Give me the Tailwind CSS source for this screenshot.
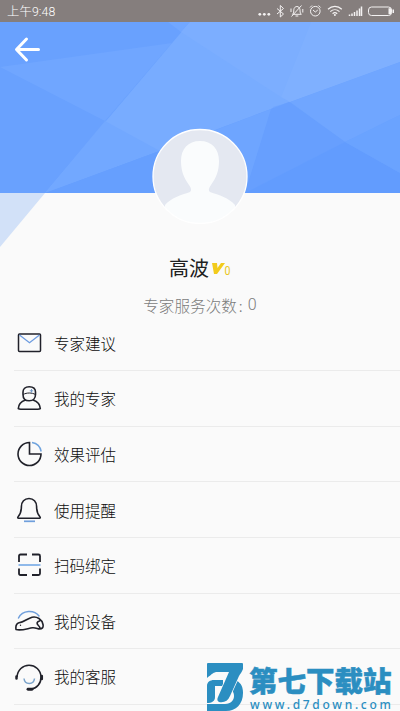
<!DOCTYPE html>
<html lang="zh-CN">
<head>
<meta charset="utf-8">
<meta name="viewport" content="width=device-width, initial-scale=1">
<title>高波</title>
<script src="https://cdn.jsdelivr.net/npm/@tailwindcss/browser@4"></script>
</head>
<body class="bg-[#fafafa] overflow-hidden font-['Noto_Sans_CJK_SC',sans-serif]">
<div class="relative w-[400px] h-[711px] overflow-hidden flex flex-col">
  <div class="h-[22px] shrink-0 bg-[#857e7d] flex items-center justify-between pl-[7px] text-white">
    <span class="pt-[1px] text-[12.300px] leading-[22px] font-light tracking-[0.150px] font-[Roboto,'Noto_Sans_CJK_SC',sans-serif]">上午9:48</span>
    <svg class="w-[150px] h-[22px]" viewBox="250 0 150 22" fill="none" stroke="#f4f2f2" stroke-width="1">
      <g fill="#f4f2f2" stroke="none"><circle cx="259.800" cy="14.300" r="1.400"/><circle cx="264.300" cy="14.300" r="1.400"/><circle cx="268.800" cy="14.300" r="1.400"/></g>
      <path d="M277 8.500l6.500 5.500-3.200 3V5.500l3.200 3-6.500 5.500"/>
      <path d="M292.500 14.300c1.500-1.400 1.200-3 1.300-4.500.2-2 1.500-3.300 3.100-3.300s2.900 1.300 3.100 3.300c.1 1.500-.2 3.100 1.300 4.500zM295.500 16h2.800M301.500 5.500l-10 11M291 8.500v3.500M302.800 9v3.500"/>
      <circle cx="315.300" cy="11.200" r="4.800"/><path d="M313 10l2.300 2 2.500-2M310 7.500l2-2M318.600 5.500l2 2"/>
      <path d="M328 9.300c4-3.800 9.800-3.800 13.800 0M330.300 11.600c2.700-2.500 6.500-2.500 9.200 0M332.600 13.700c1.400-1.200 3.200-1.200 4.600 0" stroke-width="1.200"/><circle cx="334.900" cy="15" r="1" fill="#f4f2f2" stroke="none"/>
      <path d="M349.500 16v-1.500M352 16v-2.500M354.500 16v-4M357 16v-5.500M359.500 16V8.500M361.500 16V6.500" stroke-width="1.500"/>
      <rect x="368.500" y="7" width="23" height="8.500" rx="3"/><path d="M388.500 8.300h1.500c1 0 1.500.5 1.500 1.500v3c0 1-.5 1.500-1.500 1.500h-1.500zM392.500 9.500h1.500v3.500h-1.500z" fill="#f4f2f2" stroke="none"/>
    </svg>
  </div>

  <header class="relative h-[171px] shrink-0">
    <svg class="block w-[400px] h-[226px]" viewBox="0 22 400 226">
      <path d="M0 22h400v171H0z" fill="#69a1fe"/>
      <path d="M0 67L172 43 105 121z" fill="#70a6ff"/>
      <path d="M190 22h210v40L290 102 45 193z" fill="#78acff"/>
      <path d="M45 193L105 121 160 151 155 152z" fill="#72a8ff"/>
      <path d="M168 22h22l-9 10z" fill="#71a7ff"/>
      <path d="M190 22h121L281 97 181 32z" fill="#7caeff"/>
      <path d="M311 22h89v40L290 102l-9-5z" fill="#7fb0ff"/>
      <path d="M400 62L290 102l55 40 55-27z" fill="#70a6ff"/>
      <path d="M290 102L160 151l-60 42h145l28-86z" fill="#6ea5ff"/>
      <path d="M45 193l115-42 20-5v47z" fill="#669ffe"/>
      <path d="M289 102l-18 7-26 84 100-51z" fill="#679ffe"/>
      <path d="M245 193l100-51 55 31v20z" fill="#629cfe"/>
      <path d="M400 115l-55 27 55 31z" fill="#6aa3ff"/>
      <path d="M0 193h45L0 247z" fill="#d2e1f8"/>
    </svg>
    <svg class="absolute left-[13px] top-[13px] w-7 h-7" viewBox="0 0 28 28" fill="none" stroke="#fff" stroke-width="3" stroke-linecap="round" stroke-linejoin="round"><path d="M13.500 4L3.500 14.500l10 10.500M4 14.500h21.500"/></svg>
    <svg class="absolute left-[152px] top-[106px] w-24 h-24" viewBox="0 0 96 96">
      <defs><clipPath id="face"><circle cx="48" cy="48.500" r="47"/></clipPath></defs>
      <circle cx="48" cy="48.500" r="47" fill="#e4e8f1"/>
      <path clip-path="url(#face)" d="M48 13c-12 0-19 8-19 20 0 10 3 17 8 24 2 3 3 5 1 7-9 3-19 6-25 13v19h70V77c-6-7-16-10-25-13-2-2-1-4 1-7 5-7 8-14 8-24 0-12-7-20-19-20z" fill="#fafcfd"/>
      <circle cx="48" cy="48.500" r="47" fill="none" stroke="#fff" stroke-width="1.300"/>
    </svg>
  </header>

  <section class="h-[122.500px] shrink-0 pt-[60px] flex flex-col items-center relative">
    <h1 class="flex items-center h-[30px] text-[20px] leading-[30px] font-normal text-[#202020]">高波
      <svg class="ml-[3px] mt-[1px] w-[13px] h-[13px]" viewBox="0 0 13 13"><path d="M0 1h5l.5 5L9 1h4L5 12H2z" fill="#f2cb1c"/></svg>
      <span class="mt-[5px] text-[12.500px] scale-x-[0.850] -ml-[1px] font-normal font-[Roboto,sans-serif] text-[#e9c622]">0</span>
    </h1>
    <p class="mt-[11px] h-[22px] text-[15.600px] leading-[22px] font-light text-[#7c7c7c] whitespace-nowrap flex"><span>专家服务次数</span><span class="w-[11px] pl-[2px]">:</span><span class="font-[Roboto,sans-serif] text-[16px]">0</span></p>
  </section>

  <nav class="flex flex-col text-[15.500px] font-light text-[#0c0c0c] [&>a]:h-[55.630px] [&>a]:shrink-0 [&>a]:ml-[14px] [&>a]:flex [&>a]:items-center [&>a]:border-b [&>a]:border-[#ebebeb] [&_span]:pt-[1px] [&_svg]:w-[30px] [&_svg]:h-[30px] [&_svg]:mr-[10px] [&_svg]:shrink-0">
    <a><svg viewBox="0 0 30 30" fill="none" stroke="#20212a" stroke-width="1.500"><rect x="4.500" y="6" width="22" height="17.500" rx="1"/><path d="M5.500 7l10 7.700L25.500 7" stroke="#6c9be0" stroke-width="1.300"/></svg><span>专家建议</span></a>
    <a><svg viewBox="0 0 30 30" fill="none" stroke="#20212a" stroke-width="1.600" stroke-linejoin="round"><path d="M9 9c0-3 2-5.300 6.200-5.300S21.500 6 21.500 9v2.500c0 3.500-2.200 6.300-6.300 6.300S9 15 9 11.500zM11.500 17c-4.300 1.500-7 4.200-7.200 8.600.8.600 1.500.6 2.500.6h17c1 0 1.700 0 2.500-.6-.2-4.400-3-7.100-7.300-8.600"/><path d="M9.300 11.500c3-2 9-2 12 0" stroke-width="1"/><path d="M17.500 6v3.500M15.800 7.800h3.400" stroke="#739bc9" stroke-width="1"/></svg><span>我的专家</span></a>
    <a><svg viewBox="0 0 30 30" fill="none" stroke="#20212a" stroke-width="1.600"><path d="M15.500 3.500A11.500 11.500 0 1 0 27 15H15.500z"/><path d="M18 3.500c4.800.7 8.300 4.200 9.200 9" stroke="#6fa3de" stroke-width="1.400"/></svg><span>效果评估</span></a>
    <a><svg viewBox="0 0 30 30" fill="none" stroke="#20212a" stroke-width="1.600" stroke-linejoin="round"><path d="M4.500 23.200c-.8 0-1-.8-.4-1.400 2.700-3 3.300-5.800 3.300-10.300 0-4.500 3-8 7.600-8s7.600 3.500 7.600 8c0 4.500.6 7.300 3.300 10.300.6.600.4 1.400-.4 1.400z"/><path d="M10 26.300h11" stroke="#6f9fdc" stroke-width="1.700"/></svg><span>使用提醒</span></a>
    <a><svg viewBox="0 0 30 30" fill="none" stroke="#20212a" stroke-width="1.800"><path d="M13 4.500H6.500c-1 0-1.500.5-1.500 1.500v6M18 4.500h6.500c1 0 1.500.5 1.500 1.500v6M13 25H6.500c-1 0-1.500-.5-1.500-1.500v-5M18 25h6.500c1 0 1.500-.5 1.500-1.500v-5"/><path d="M4.500 15h22" stroke="#6ba3e4" stroke-width="1.500"/></svg><span>扫码绑定</span></a>
    <a><svg viewBox="0 0 30 30" fill="none" stroke="#20212a" stroke-width="1.600" stroke-linejoin="round" stroke-linecap="round"><path d="M4.500 12C8.500 4 20 3.500 25 10" stroke="#6f9fdc" stroke-width="1.500"/><path d="M2 23.500c-.5-3.500.2-6 3-6.800 4.500-.2 8.500-4.200 13-5.500 5-1.200 10 2.300 11 7.300.6 3-.8 4.500-3.500 4.500-2-.2-4-1.500-7-1.200-5 .7-11.500 3.200-16.500 1.700zM25.500 15c-2.500.5-3 2.500-1.500 4 1 1 2 2 2 3.500"/><circle cx="6.500" cy="19.300" r=".7" fill="#20212a" stroke="none"/></svg><span>我的设备</span></a>
    <a><svg viewBox="0 0 30 30" fill="none" stroke="#20212a" stroke-width="1.600"><path d="M3 15C3.500 8 8.700 3.200 15 3.200S26.800 8 27 15c.2 6.500-4.200 11.500-10.500 12.400"/><path d="M2.500 14.500v2M27.800 14v3" stroke-width="2.500" stroke-linecap="round"/><path d="M14 27.300h4" stroke-width="2.900" stroke-linecap="round"/><path d="M10 16.500c.7 6.500 9.800 6.500 10.500 0" stroke="#7ba4cb" stroke-width="1.500"/></svg><span>我的客服</span></a>
  </nav>

  <div class="absolute left-[206px] top-[662px] w-[190px] h-[49px] flex text-[#2b8ec1]">
    <svg class="w-[38px] h-[49px] shrink-0" viewBox="0 0 38 49" fill="currentColor">
      <path d="M1 24c0-4 3-6 7-6h9v6H9v11c0 4-3 6-8 6z"/>
      <path d="M1 42h18c6 0 9-4 9-8 0-3-1-4-2-6l5-9c4 2 6 6 6 12 0 11-7 18-17 18H1z"/>
      <path d="M2 1h34q1 0 1 1v5c-1 3-3 5-4 7l-9 20c-2 5-6 7-11 6-2-1-2-3-1-5L23 10H11c-3 0-5 2-10 6V2q0-1 1-1z" stroke="#fafafa" stroke-width="1.500" paint-order="stroke"/>
    </svg>
    <div class="ml-[5px] w-[145px]">
      <div class="h-[36px] text-[28.500px] leading-[35px] font-black whitespace-nowrap [-webkit-text-stroke:0.500px_#2b8ec1]">第七下载站</div>
      <div class="h-[13px] ml-[1px] text-[12px] leading-[13px] font-medium tracking-[2.700px] whitespace-nowrap font-['Noto_Sans',sans-serif]">www.d7down.com</div>
    </div>
  </div>
</div>
</body>
</html>
